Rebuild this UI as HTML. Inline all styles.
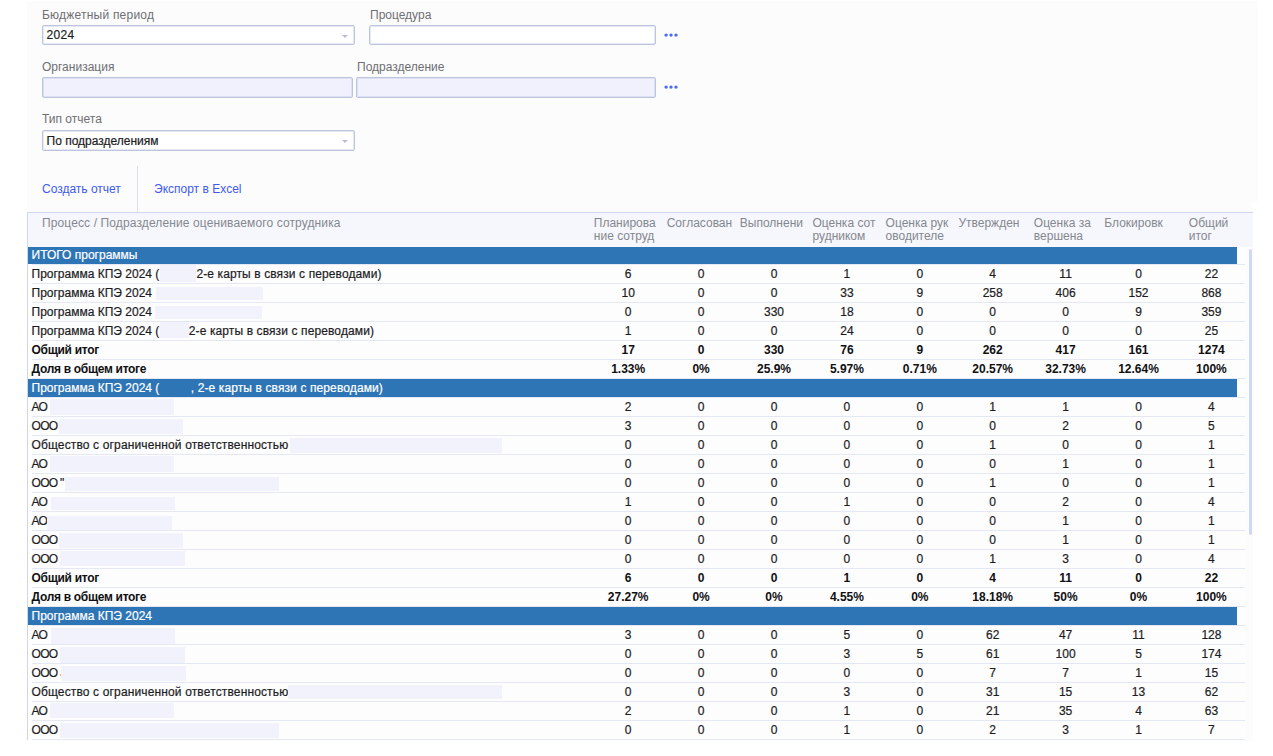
<!DOCTYPE html>
<html lang="ru">
<head>
<meta charset="utf-8">
<title>Отчет по процессам КПЭ</title>
<style>
*{box-sizing:border-box;margin:0;padding:0}
html,body{width:1273px;height:756px;overflow:hidden;background:#fff}
body{font-family:"Liberation Sans",sans-serif;font-size:12px;color:#1c1c1e;position:relative}
.panel{position:absolute;left:27px;top:1px;width:1231px;height:201px;background:#fcfcfc}
.panel2{position:absolute;left:27px;top:202px;width:1226px;height:539px;background:#fcfcfd}
.lbl{position:absolute;color:#6e6e73;font-size:12px;line-height:14px;white-space:nowrap}
.inp{position:absolute;height:20px;border:1px solid #bcc5de;box-shadow:inset 0 0 0 1px rgba(188,197,222,.38);border-radius:2px;background:#fff;font-size:12px;line-height:18px;padding-left:3.5px;color:#1c1c1e;white-space:nowrap}
.inp.ro{background:#f0f1fc}
.inp .arr{position:absolute;right:6px;top:8.5px;width:0;height:0;border-left:3.5px solid transparent;border-right:3.5px solid transparent;border-top:3.5px solid #b7bbdd}
.dots{position:absolute;width:16px;height:6px;overflow:visible}
.dots circle{fill:#4a6bf6}
.lnk{position:absolute;color:#3f5af0;font-size:12px;line-height:14px;white-space:nowrap;text-decoration:none}
.vsep{position:absolute;left:137px;top:166px;width:1px;height:46px;background:#dcdfe8}
/* grid */
.ghead{z-index:1;position:absolute;left:27px;top:212px;width:1226px;height:35px;background:#f5f7fc;border-top:1px solid #cfd7ee;border-left:1px solid #cfd7ee}
.ghead span{position:absolute;top:4px;color:#85878f;font-size:12px;line-height:12.5px;white-space:nowrap}
.gbody{position:absolute;left:27px;top:246.2px;width:1219px;height:493.5px;border-left:1px solid #cfd7ee;background:#fdfdfe}
.row{position:absolute;left:0;width:1217px;height:18.985px}
.row .ln{position:absolute;left:4px;right:0;top:17.97px;height:1px;background:#e4e7f4}
.row .t{position:absolute;left:3.5px;top:0;line-height:18.3px;white-space:nowrap}
.row .n{position:absolute;top:0;width:73px;text-align:center;line-height:18.3px;white-space:nowrap}
.row.b{font-weight:bold;color:#101012}
.row.h .bg{position:absolute;left:0;top:.4px;width:1208.5px;height:17.5px;background:#2e75b6}
.row.h .t{color:#fff}
.rd{position:absolute;top:1.8px;height:14.8px;background:#f1f2fb}
.od{position:absolute;top:10px;width:1px;height:2px;background:#f0b070}
.sbar{position:absolute;left:1248.6px;top:249px;width:3.4px;height:285.5px;border-radius:2px;background:#cfd9f3}
.row .t,.row .n,.inp{-webkit-text-stroke:.2px currentColor}
.row.b .t,.row.b .n{-webkit-text-stroke:0}
</style>
</head>
<body>
<div class="panel"></div>
<div class="panel2"></div>

<div class="lbl" style="left:42px;top:8px;letter-spacing:.22px">Бюджетный период</div>
<div class="inp" style="left:42px;top:25px;width:313px;letter-spacing:.3px">2024<b class="arr"></b></div>
<div class="lbl" style="left:370px;top:8px">Процедура</div>
<div class="inp" style="left:369px;top:25px;width:287px"></div>
<svg class="dots" style="left:664px;top:32px" viewBox="0 0 16 6"><circle cx="2.1" cy="3.1" r="1.7"/><circle cx="7" cy="3.1" r="1.7"/><circle cx="12" cy="3.1" r="1.7"/></svg>

<div class="lbl" style="left:42px;top:60px">Организация</div>
<div class="inp ro" style="left:42px;top:77px;width:311px;height:21px"></div>
<div class="lbl" style="left:357px;top:60px">Подразделение</div>
<div class="inp ro" style="left:356px;top:77px;width:300px;height:21px"></div>
<svg class="dots" style="left:664px;top:84px" viewBox="0 0 16 6"><circle cx="2.1" cy="3.1" r="1.7"/><circle cx="7" cy="3.1" r="1.7"/><circle cx="12" cy="3.1" r="1.7"/></svg>

<div class="lbl" style="left:42px;top:112px">Тип отчета</div>
<div class="inp" style="left:42px;top:130px;width:313px;height:21px;line-height:20px">По подразделениям<b class="arr"></b></div>

<a class="lnk" style="left:42px;top:182px">Создать отчет</a>
<div class="vsep"></div>
<a class="lnk" style="left:154px;top:182px">Экспорт в Excel</a>

<div class="ghead" id="ghead">
<span style="left:14px;letter-spacing:.12px">Процесс / Подразделение оцениваемого сотрудника</span>
<span style="left:565.8px">Планирова<br>ние сотруд</span>
<span style="left:638.7px">Согласован</span>
<span style="left:711.8px">Выполнени</span>
<span style="left:784.5px">Оценка сот<br>рудником</span>
<span style="left:857.6px">Оценка рук<br>оводителе</span>
<span style="left:930.4px">Утвержден</span>
<span style="left:1005.8px">Оценка за<br>вершена</span>
<span style="left:1076.3px">Блокировк</span>
<span style="left:1160.8px">Общий<br>итог</span>
</div>
<div class="gbody" id="gbody">
<div class="row h" style="top:0.000px"><i class="ln"></i><i class="bg"></i><span class="t">ИТОГО программы</span></div>
<div class="row" style="top:18.985px"><i class="ln"></i><span class="t">Программа КПЭ 2024 (</span><i class="rd" style="left:131.8px;width:36.3px;top:-0.4px;height:17px"></i><span class="t" style="left:168.4px;letter-spacing:.11px">2-е карты в связи с переводами)</span><span class="n" style="left:563.7px">6</span><span class="n" style="left:636.6px">0</span><span class="n" style="left:709.5px">0</span><span class="n" style="left:782.4px">1</span><span class="n" style="left:855.3px">0</span><span class="n" style="left:928.2px">4</span><span class="n" style="left:1001.1px">11</span><span class="n" style="left:1074.0px">0</span><span class="n" style="left:1146.9px">22</span></div>
<div class="row" style="top:37.970px"><i class="ln"></i><span class="t">Программа КПЭ 2024</span><i class="rd" style="left:128.2px;width:106.6px;top:2.9px;height:12.8px"></i><span class="n" style="left:563.7px">10</span><span class="n" style="left:636.6px">0</span><span class="n" style="left:709.5px">0</span><span class="n" style="left:782.4px">33</span><span class="n" style="left:855.3px">9</span><span class="n" style="left:928.2px">258</span><span class="n" style="left:1001.1px">406</span><span class="n" style="left:1074.0px">152</span><span class="n" style="left:1146.9px">868</span></div>
<div class="row" style="top:56.955px"><i class="ln"></i><span class="t">Программа КПЭ 2024</span><i class="rd" style="left:127.1px;width:106.6px;top:2.6px;height:13.1px"></i><span class="n" style="left:563.7px">0</span><span class="n" style="left:636.6px">0</span><span class="n" style="left:709.5px">330</span><span class="n" style="left:782.4px">18</span><span class="n" style="left:855.3px">0</span><span class="n" style="left:928.2px">0</span><span class="n" style="left:1001.1px">0</span><span class="n" style="left:1074.0px">9</span><span class="n" style="left:1146.9px">359</span></div>
<div class="row" style="top:75.940px"><i class="ln"></i><span class="t">Программа КПЭ 2024 (</span><i class="rd" style="left:131.8px;width:29.4px;top:-0.2px;height:16px"></i><span class="t" style="left:160.8px;letter-spacing:.11px">2-е карты в связи с переводами)</span><span class="n" style="left:563.7px">1</span><span class="n" style="left:636.6px">0</span><span class="n" style="left:709.5px">0</span><span class="n" style="left:782.4px">24</span><span class="n" style="left:855.3px">0</span><span class="n" style="left:928.2px">0</span><span class="n" style="left:1001.1px">0</span><span class="n" style="left:1074.0px">0</span><span class="n" style="left:1146.9px">25</span></div>
<div class="row b" style="top:94.925px"><i class="ln"></i><span class="t" style="letter-spacing:-0.3px">Общий итог</span><span class="n" style="left:563.7px">17</span><span class="n" style="left:636.6px">0</span><span class="n" style="left:709.5px">330</span><span class="n" style="left:782.4px">76</span><span class="n" style="left:855.3px">9</span><span class="n" style="left:928.2px">262</span><span class="n" style="left:1001.1px">417</span><span class="n" style="left:1074.0px">161</span><span class="n" style="left:1146.9px">1274</span></div>
<div class="row b" style="top:113.910px"><i class="ln"></i><span class="t" style="letter-spacing:-0.3px">Доля в общем итоге</span><span class="n" style="left:563.7px">1.33%</span><span class="n" style="left:636.6px">0%</span><span class="n" style="left:709.5px">25.9%</span><span class="n" style="left:782.4px">5.97%</span><span class="n" style="left:855.3px">0.71%</span><span class="n" style="left:928.2px">20.57%</span><span class="n" style="left:1001.1px">32.73%</span><span class="n" style="left:1074.0px">12.64%</span><span class="n" style="left:1146.9px">100%</span></div>
<div class="row h" style="top:132.895px"><i class="ln"></i><i class="bg"></i><span class="t">Программа КПЭ 2024 (</span><span class="t" style="left:162.8px;letter-spacing:.11px">, 2-е карты в связи с переводами)</span></div>
<div class="row" style="top:151.880px"><i class="ln"></i><span class="t" style="letter-spacing:-0.8px">АО</span><i class="rd" style="left:21.9px;width:124.1px;top:0.8px;height:15.9px"></i><span class="n" style="left:563.7px">2</span><span class="n" style="left:636.6px">0</span><span class="n" style="left:709.5px">0</span><span class="n" style="left:782.4px">0</span><span class="n" style="left:855.3px">0</span><span class="n" style="left:928.2px">1</span><span class="n" style="left:1001.1px">1</span><span class="n" style="left:1074.0px">0</span><span class="n" style="left:1146.9px">4</span></div>
<div class="row" style="top:170.865px"><i class="ln"></i><span class="t" style="letter-spacing:-0.7px">ООО</span><i class="rd" style="left:31.2px;width:124.3px;top:1.7px;height:14.9px"></i><span class="n" style="left:563.7px">3</span><span class="n" style="left:636.6px">0</span><span class="n" style="left:709.5px">0</span><span class="n" style="left:782.4px">0</span><span class="n" style="left:855.3px">0</span><span class="n" style="left:928.2px">0</span><span class="n" style="left:1001.1px">2</span><span class="n" style="left:1074.0px">0</span><span class="n" style="left:1146.9px">5</span></div>
<div class="row" style="top:189.850px"><i class="ln"></i><span class="t" style="letter-spacing:0.14px">Общество с ограниченной ответственностью</span><i class="rd" style="left:262.4px;width:211.6px;top:1.7px;height:14.9px"></i><span class="n" style="left:563.7px">0</span><span class="n" style="left:636.6px">0</span><span class="n" style="left:709.5px">0</span><span class="n" style="left:782.4px">0</span><span class="n" style="left:855.3px">0</span><span class="n" style="left:928.2px">1</span><span class="n" style="left:1001.1px">0</span><span class="n" style="left:1074.0px">0</span><span class="n" style="left:1146.9px">1</span></div>
<div class="row" style="top:208.835px"><i class="ln"></i><span class="t" style="letter-spacing:-0.8px">АО</span><i class="rd" style="left:21.9px;width:124.1px;top:1.4px;height:15.2px"></i><span class="n" style="left:563.7px">0</span><span class="n" style="left:636.6px">0</span><span class="n" style="left:709.5px">0</span><span class="n" style="left:782.4px">0</span><span class="n" style="left:855.3px">0</span><span class="n" style="left:928.2px">0</span><span class="n" style="left:1001.1px">1</span><span class="n" style="left:1074.0px">0</span><span class="n" style="left:1146.9px">1</span></div>
<div class="row" style="top:227.820px"><i class="ln"></i><span class="t" style="letter-spacing:-0.7px">ООО "</span><i class="rd" style="left:36.9px;width:214.4px;top:2.7px;height:13.9px"></i><span class="n" style="left:563.7px">0</span><span class="n" style="left:636.6px">0</span><span class="n" style="left:709.5px">0</span><span class="n" style="left:782.4px">0</span><span class="n" style="left:855.3px">0</span><span class="n" style="left:928.2px">1</span><span class="n" style="left:1001.1px">0</span><span class="n" style="left:1074.0px">0</span><span class="n" style="left:1146.9px">1</span></div>
<div class="row" style="top:246.805px"><i class="ln"></i><span class="t" style="letter-spacing:-0.8px">АО</span><i class="rd" style="left:22.8px;width:124.1px;top:3.9px;height:12.7px"></i><span class="n" style="left:563.7px">1</span><span class="n" style="left:636.6px">0</span><span class="n" style="left:709.5px">0</span><span class="n" style="left:782.4px">1</span><span class="n" style="left:855.3px">0</span><span class="n" style="left:928.2px">0</span><span class="n" style="left:1001.1px">2</span><span class="n" style="left:1074.0px">0</span><span class="n" style="left:1146.9px">4</span></div>
<div class="row" style="top:265.790px"><i class="ln"></i><span class="t" style="letter-spacing:-0.8px">АО</span><i class="rd" style="left:19.3px;width:124.3px;top:3.8px;height:14.5px"></i><span class="n" style="left:563.7px">0</span><span class="n" style="left:636.6px">0</span><span class="n" style="left:709.5px">0</span><span class="n" style="left:782.4px">0</span><span class="n" style="left:855.3px">0</span><span class="n" style="left:928.2px">0</span><span class="n" style="left:1001.1px">1</span><span class="n" style="left:1074.0px">0</span><span class="n" style="left:1146.9px">1</span></div>
<div class="row" style="top:284.775px"><i class="ln"></i><span class="t" style="letter-spacing:-0.7px">ООО</span><i class="rd" style="left:31.2px;width:124.0px;top:1.6px;height:15px"></i><span class="n" style="left:563.7px">0</span><span class="n" style="left:636.6px">0</span><span class="n" style="left:709.5px">0</span><span class="n" style="left:782.4px">0</span><span class="n" style="left:855.3px">0</span><span class="n" style="left:928.2px">0</span><span class="n" style="left:1001.1px">1</span><span class="n" style="left:1074.0px">0</span><span class="n" style="left:1146.9px">1</span></div>
<div class="row" style="top:303.760px"><i class="ln"></i><span class="t" style="letter-spacing:-0.7px">ООО</span><i class="rd" style="left:32.1px;width:124.5px;top:1.5px;height:15px"></i><span class="n" style="left:563.7px">0</span><span class="n" style="left:636.6px">0</span><span class="n" style="left:709.5px">0</span><span class="n" style="left:782.4px">0</span><span class="n" style="left:855.3px">0</span><span class="n" style="left:928.2px">1</span><span class="n" style="left:1001.1px">3</span><span class="n" style="left:1074.0px">0</span><span class="n" style="left:1146.9px">4</span></div>
<div class="row b" style="top:322.745px"><i class="ln"></i><span class="t" style="letter-spacing:-0.3px">Общий итог</span><span class="n" style="left:563.7px">6</span><span class="n" style="left:636.6px">0</span><span class="n" style="left:709.5px">0</span><span class="n" style="left:782.4px">1</span><span class="n" style="left:855.3px">0</span><span class="n" style="left:928.2px">4</span><span class="n" style="left:1001.1px">11</span><span class="n" style="left:1074.0px">0</span><span class="n" style="left:1146.9px">22</span></div>
<div class="row b" style="top:341.730px"><i class="ln"></i><span class="t" style="letter-spacing:-0.3px">Доля в общем итоге</span><span class="n" style="left:563.7px">27.27%</span><span class="n" style="left:636.6px">0%</span><span class="n" style="left:709.5px">0%</span><span class="n" style="left:782.4px">4.55%</span><span class="n" style="left:855.3px">0%</span><span class="n" style="left:928.2px">18.18%</span><span class="n" style="left:1001.1px">50%</span><span class="n" style="left:1074.0px">0%</span><span class="n" style="left:1146.9px">100%</span></div>
<div class="row h" style="top:360.715px"><i class="ln"></i><i class="bg"></i><span class="t">Программа КПЭ 2024</span></div>
<div class="row" style="top:379.700px"><i class="ln"></i><span class="t" style="letter-spacing:-0.8px">АО</span><i class="rd" style="left:22.8px;width:124.4px;top:2.5px;height:15.4px"></i><span class="n" style="left:563.7px">3</span><span class="n" style="left:636.6px">0</span><span class="n" style="left:709.5px">0</span><span class="n" style="left:782.4px">5</span><span class="n" style="left:855.3px">0</span><span class="n" style="left:928.2px">62</span><span class="n" style="left:1001.1px">47</span><span class="n" style="left:1074.0px">11</span><span class="n" style="left:1146.9px">128</span></div>
<div class="row" style="top:398.685px"><i class="ln"></i><span class="t" style="letter-spacing:-0.7px">ООО</span><i class="rd" style="left:32.2px;width:124.6px;top:2.6px;height:15.1px"></i><span class="n" style="left:563.7px">0</span><span class="n" style="left:636.6px">0</span><span class="n" style="left:709.5px">0</span><span class="n" style="left:782.4px">3</span><span class="n" style="left:855.3px">5</span><span class="n" style="left:928.2px">61</span><span class="n" style="left:1001.1px">100</span><span class="n" style="left:1074.0px">5</span><span class="n" style="left:1146.9px">174</span></div>
<div class="row" style="top:417.670px"><i class="ln"></i><span class="t" style="letter-spacing:-0.7px">ООО</span><i class="od" style="left:32.4px"></i><i class="rd" style="left:33.4px;width:124.6px;top:2.2px;height:15.4px"></i><span class="n" style="left:563.7px">0</span><span class="n" style="left:636.6px">0</span><span class="n" style="left:709.5px">0</span><span class="n" style="left:782.4px">0</span><span class="n" style="left:855.3px">0</span><span class="n" style="left:928.2px">7</span><span class="n" style="left:1001.1px">7</span><span class="n" style="left:1074.0px">1</span><span class="n" style="left:1146.9px">15</span></div>
<div class="row" style="top:436.655px"><i class="ln"></i><span class="t" style="letter-spacing:0.14px">Общество с ограниченной ответственностью</span><i class="rd" style="left:259.7px;width:214.3px;top:1.7px;height:14.9px"></i><span class="n" style="left:563.7px">0</span><span class="n" style="left:636.6px">0</span><span class="n" style="left:709.5px">0</span><span class="n" style="left:782.4px">3</span><span class="n" style="left:855.3px">0</span><span class="n" style="left:928.2px">31</span><span class="n" style="left:1001.1px">15</span><span class="n" style="left:1074.0px">13</span><span class="n" style="left:1146.9px">62</span></div>
<div class="row" style="top:455.640px"><i class="ln"></i><span class="t" style="letter-spacing:-0.8px">АО</span><i class="rd" style="left:21.8px;width:124.3px;top:1px;height:15.2px"></i><span class="n" style="left:563.7px">2</span><span class="n" style="left:636.6px">0</span><span class="n" style="left:709.5px">0</span><span class="n" style="left:782.4px">1</span><span class="n" style="left:855.3px">0</span><span class="n" style="left:928.2px">21</span><span class="n" style="left:1001.1px">35</span><span class="n" style="left:1074.0px">4</span><span class="n" style="left:1146.9px">63</span></div>
<div class="row" style="top:474.625px"><i class="ln"></i><span class="t" style="letter-spacing:-0.7px">ООО</span><i class="rd" style="left:32.2px;width:219.1px;top:2.4px;height:15.1px"></i><span class="n" style="left:563.7px">0</span><span class="n" style="left:636.6px">0</span><span class="n" style="left:709.5px">0</span><span class="n" style="left:782.4px">1</span><span class="n" style="left:855.3px">0</span><span class="n" style="left:928.2px">2</span><span class="n" style="left:1001.1px">3</span><span class="n" style="left:1074.0px">1</span><span class="n" style="left:1146.9px">7</span></div>
</div>
<div class="sbar"></div>
</body>
</html>
